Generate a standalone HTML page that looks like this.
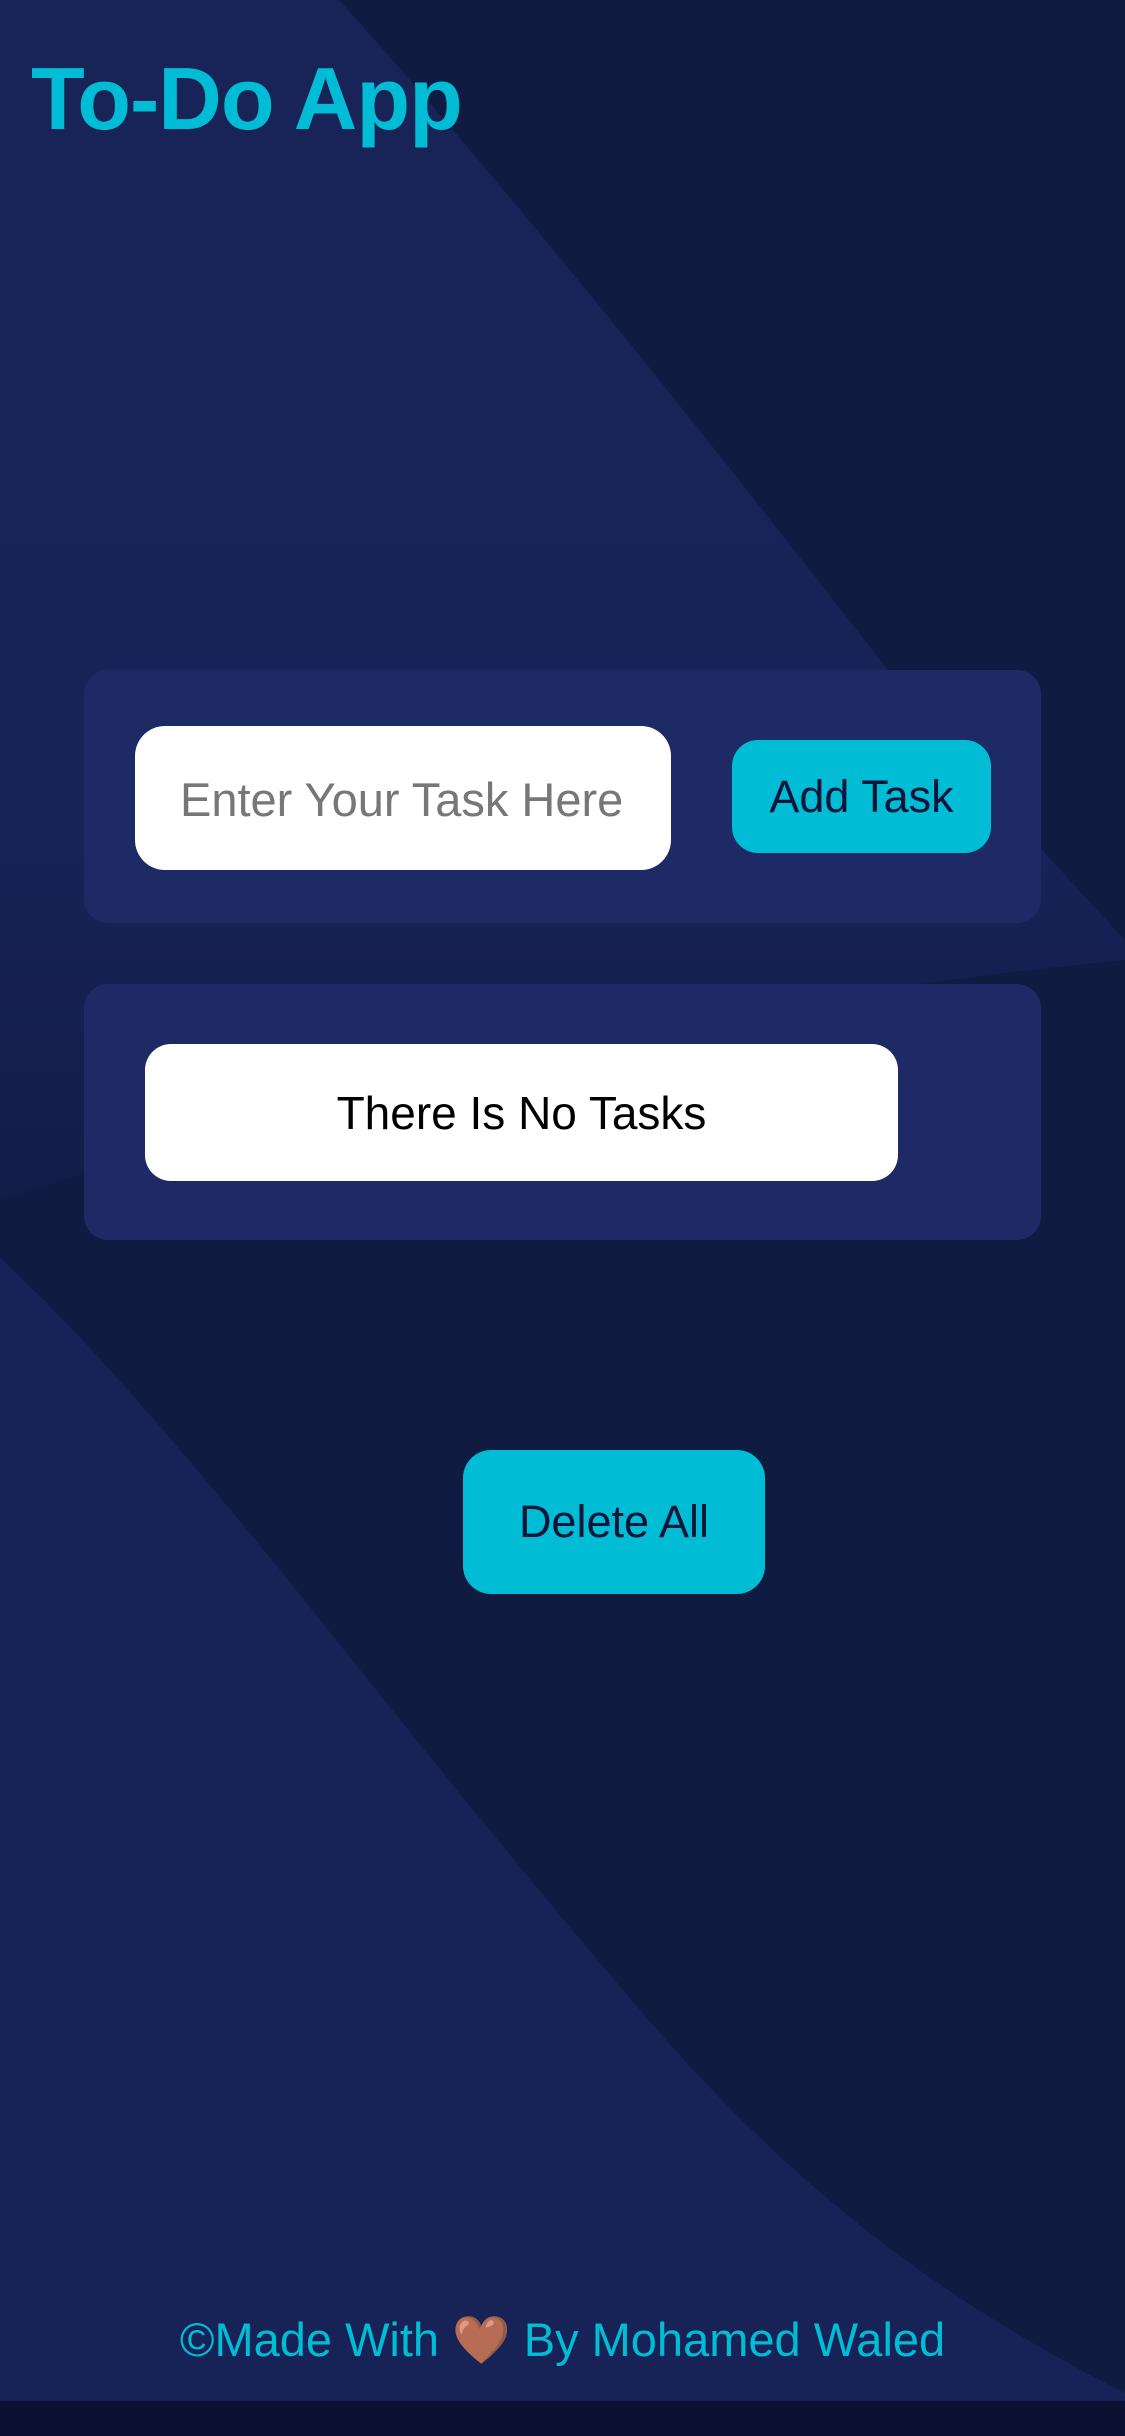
<!DOCTYPE html>
<html><head><meta charset="utf-8"><style>
html,body{margin:0;padding:0;}
body{width:1125px;height:2436px;position:relative;overflow:hidden;background:#101b41;font-family:"Liberation Sans","DejaVu Sans",sans-serif;}
svg.bg{position:absolute;left:0;top:0;}
.title{position:absolute;left:31px;top:48px;font-size:88px;font-weight:bold;color:#00bcd4;letter-spacing:-1px;}
.card{position:absolute;left:84px;width:957px;background:#1e2a66;border-radius:24px;}
.input{position:absolute;left:135px;top:726px;width:536px;height:144px;background:#fff;border-radius:30px;overflow:hidden;}
.input span{position:absolute;left:45px;top:46px;font-size:47px;color:#777;white-space:nowrap;}
.btn{position:absolute;background:#00bcd4;color:#0d1538;display:flex;align-items:center;justify-content:center;}
.notask{position:absolute;left:145px;top:1044px;width:753px;height:137px;background:#fff;border-radius:26px;display:flex;align-items:center;justify-content:center;font-size:46px;color:#000;}
.footer{position:absolute;left:0;width:1125px;top:2312px;text-align:center;font-size:47px;color:#00bcd4;}
.bar{position:absolute;left:0;top:2401px;width:1125px;height:35px;background:#0b1030;}
</style></head><body>
<svg class="bg" width="1125" height="2436" viewBox="0 0 1125 2436">
<defs>
<linearGradient id="g1" x1="0" y1="0" x2="0" y2="1">
<stop offset="0" stop-color="#182358"/><stop offset="0.7" stop-color="#172357"/><stop offset="1" stop-color="#121c48"/>
</linearGradient>
</defs>
<path d="M0 0 L339 0 C520 200 740 480 880 660 C960 760 1050 860 1125 940 L1125 960 C700 1000 300 1100 0 1200 Z" fill="url(#g1)"/>
<path d="M0 1258 C90 1340 190 1460 280 1570 C400 1720 520 1870 640 2010 C760 2150 900 2280 1125 2393 L1125 2436 L0 2436 Z" fill="#172357"/>
</svg>
<div class="title">To-Do App</div>
<div class="card" style="top:670px;height:253px;"></div>
<div class="input"><span>Enter Your Task Here</span></div>
<div class="btn" style="left:732px;top:740px;width:259px;height:113px;border-radius:26px;font-size:45px;">Add Task</div>
<div class="card" style="top:984px;height:256px;"></div>
<div class="notask">There Is No Tasks</div>
<div class="btn" style="left:463px;top:1450px;width:302px;height:144px;border-radius:28px;font-size:45px;">Delete All</div>
<div class="footer">©Made With <span style="color:#8b5a2b">&#x1F90E;</span> By Mohamed Waled</div>
<div class="bar"></div>
</body></html>
